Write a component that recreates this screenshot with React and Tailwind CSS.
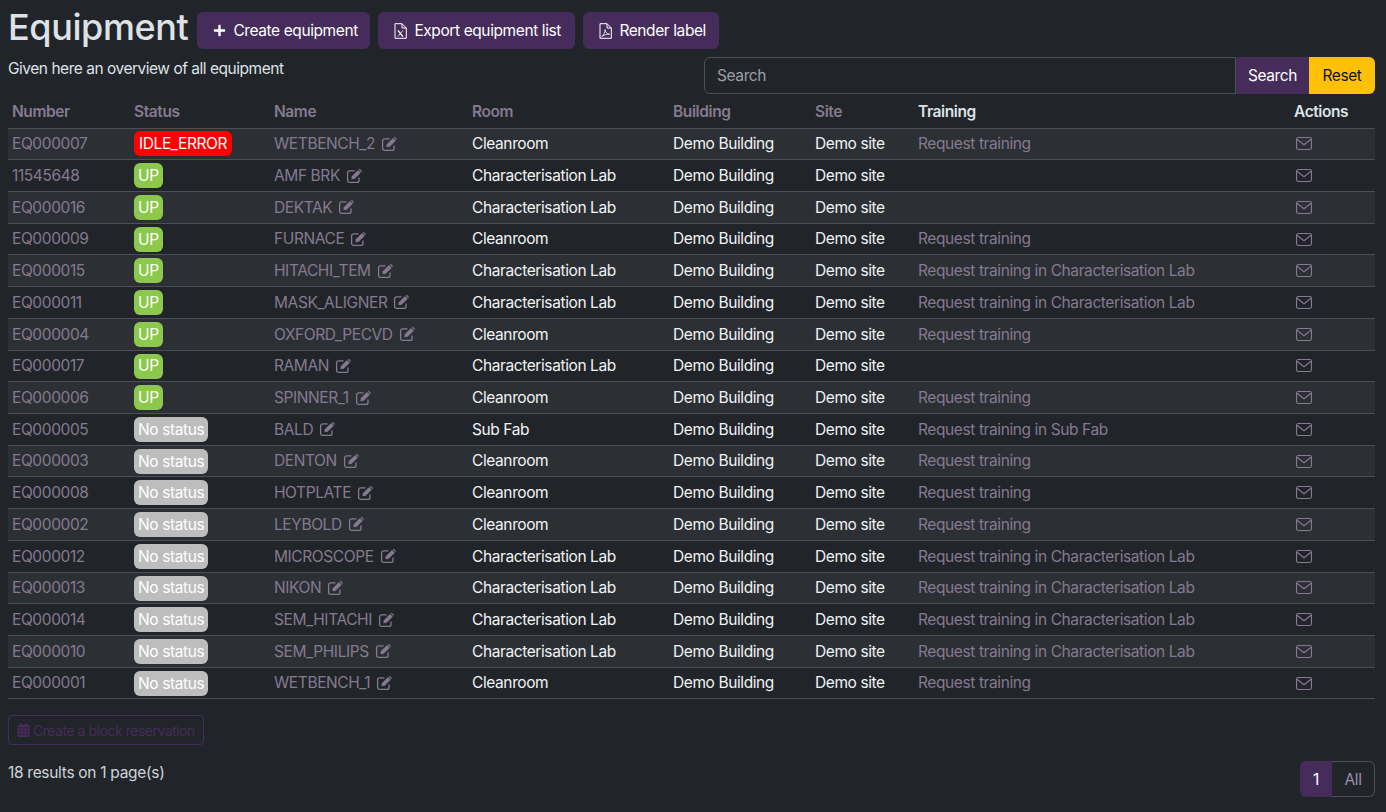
import React from 'react';
import { FaPlus, FaCalendarAlt } from 'react-icons/fa';

const CLEAN = 'Cleanroom';
const CHAR = 'Characterisation Lab';
const SUB = 'Sub Fab';

const rows = [
    ['EQ000007', 'IDLE_ERROR', 'WETBENCH_2', CLEAN, 'Request training'],
    ['11545648', 'UP', 'AMF BRK', CHAR, ''],
    ['EQ000016', 'UP', 'DEKTAK', CHAR, ''],
    ['EQ000009', 'UP', 'FURNACE', CLEAN, 'Request training'],
    ['EQ000015', 'UP', 'HITACHI_TEM', CHAR, 'Request training in Characterisation Lab'],
    ['EQ000011', 'UP', 'MASK_ALIGNER', CHAR, 'Request training in Characterisation Lab'],
    ['EQ000004', 'UP', 'OXFORD_PECVD', CLEAN, 'Request training'],
    ['EQ000017', 'UP', 'RAMAN', CHAR, ''],
    ['EQ000006', 'UP', 'SPINNER_1', CLEAN, 'Request training'],
    ['EQ000005', 'No status', 'BALD', SUB, 'Request training in Sub Fab'],
    ['EQ000003', 'No status', 'DENTON', CLEAN, 'Request training'],
    ['EQ000008', 'No status', 'HOTPLATE', CLEAN, 'Request training'],
    ['EQ000002', 'No status', 'LEYBOLD', CLEAN, 'Request training'],
    ['EQ000012', 'No status', 'MICROSCOPE', CHAR, 'Request training in Characterisation Lab'],
    ['EQ000013', 'No status', 'NIKON', CHAR, 'Request training in Characterisation Lab'],
    ['EQ000014', 'No status', 'SEM_HITACHI', CHAR, 'Request training in Characterisation Lab'],
    ['EQ000010', 'No status', 'SEM_PHILIPS', CHAR, 'Request training in Characterisation Lab'],
    ['EQ000001', 'No status', 'WETBENCH_1', CLEAN, 'Request training'],
];

const statusClass = (status) => {
    if (status === 'IDLE_ERROR') return 'bg-[#ff0000] px-[5px]';
    if (status === 'UP') return 'bg-[#8cc84b] px-[4px]';
    return 'bg-[#bdbdbd] px-[4px]';
};

const MailIcon = () => (
    <svg width="16" height="13" viewBox="0 0 16 13" fill="none" stroke="currentColor" strokeWidth="1.1" className="ml-[2px]">
        <rect x="0.55" y="0.55" width="14.9" height="11.9" rx="1.6" />
        <path d="M1 2.2 L8 7.8 L15 2.2" />
    </svg>
);

// square outline with a solid pencil, the old font-awesome look
const EditIcon = () => (
    <svg width="16" height="16" viewBox="0 0 16 16" fill="none" stroke="currentColor">
        <path strokeWidth="1.3" d="M8.5 2.8 H3.6 A2 2 0 0 0 1.6 4.8 V12.4 A2 2 0 0 0 3.6 14.4 H11 A2 2 0 0 0 13 12.4 V9.4" />
        <path fill="currentColor" strokeWidth="0.3" d="M5.6 11 L6 8.2 L12 2.2 L14.6 4.8 L8.5 10.7 Z" />
        <path fill="currentColor" strokeWidth="0.3" d="M12.8 1.5 C13.3 1 13.9 1 14.4 1.5 L15.3 2.4 C15.8 2.9 15.8 3.4 15.3 3.9 Z" />
    </svg>
);

const ExcelIcon = () => (
    <svg width="13" height="16" viewBox="0 0 13 16" fill="none" stroke="currentColor">
        <path strokeWidth="1" d="M1 0.7 H8 L12.3 5 V15.3 H1 Z M8 0.7 V5 H12.3" />
        <path strokeWidth="1.4" d="M3.9 7.4 L8.9 13.6" />
        <path strokeWidth="0.8" d="M8.9 7.4 L3.9 13.6" />
    </svg>
);

const PdfIcon = () => (
    <svg width="13" height="16" viewBox="0 0 13 16" fill="none" stroke="currentColor">
        <path strokeWidth="1" d="M1 0.7 H8 L12.3 5 V15.3 H1 Z M8 0.7 V5 H12.3" />
        <path strokeWidth="0.8" d="M2.8 13.6 C4.6 12.6 6.2 9 6 6.6 C6.6 9.4 8 10.9 10.6 11.3 C8 11 5 11.8 2.8 13.6 Z" />
    </svg>
);

const ActionButton = ({ icon, className, children }) => (
    <button className={`flex h-[37px] items-center gap-[5px] rounded-md bg-[#452c5a] pl-[13px] text-white ${className}`}>
        <span className="flex w-[18px] justify-center">{icon}</span>
        {children}
    </button>
);

const App = () => {
    return (
        <div className="min-h-[812px] bg-[#212529] px-2 text-[15.5px] tracking-[-0.4px] text-white font-['Inter',sans-serif]">
            {/* Header */}
            <div className="flex items-center gap-2 pt-[12px]">
                <h1 className="mr-[1px] pb-[7px] text-[36px] leading-[30px] font-medium text-[#dee2e6]">Equipment</h1>
                <ActionButton className="w-[173px]" icon={<FaPlus className="h-[13px] w-[13px]" />}>Create equipment</ActionButton>
                <ActionButton className="w-[197px]" icon={<ExcelIcon />}>Export equipment list</ActionButton>
                <ActionButton className="w-[136px]" icon={<PdfIcon />}>Render label</ActionButton>
            </div>

            <div className="mt-[8px] flex items-start justify-between">
                <p className="leading-[24px] tracking-[-0.48px] text-[#dee2e6]">Given here an overview of all equipment</p>
                <div className="mr-[3px] flex h-[37px] w-[671px]">
                    <div className="flex flex-1 items-center rounded-l-md border border-[#495057] px-3 text-[#9a9fa5]">Search</div>
                    <button className="w-[73px] bg-[#452c5a]">Search</button>
                    <button className="w-[66px] rounded-r-md bg-[#ffc107] text-[#111]">Reset</button>
                </div>
            </div>

            {/* Equipment table */}
            <table className="mt-[1px] w-[1367px] table-fixed border-collapse">
                <colgroup>
                    <col className="w-[122px]" />
                    <col className="w-[140px]" />
                    <col className="w-[198px]" />
                    <col className="w-[201px]" />
                    <col className="w-[142px]" />
                    <col className="w-[103px]" />
                    <col className="w-[376px]" />
                    <col className="w-[85px]" />
                </colgroup>
                <thead>
                    <tr className="h-[33px] border-b border-[#495057] text-left text-[#857a8f]">
                        <th className="px-1 font-semibold">Number</th>
                        <th className="px-1 font-semibold">Status</th>
                        <th className="px-1 font-semibold">Name</th>
                        <th className="px-1 font-semibold">Room</th>
                        <th className="px-1 font-semibold">Building</th>
                        <th className="px-1 font-semibold">Site</th>
                        <th className="px-1 font-semibold text-[#dee2e6]">Training</th>
                        <th className="px-1 font-semibold text-[#dee2e6]">Actions</th>
                    </tr>
                </thead>
                <tbody>
                    {rows.map((row, i) => (
                        <tr key={row[2]} className={`h-[31.72px] border-b border-[#495057] ${i % 2 === 0 ? 'bg-[#2c3034]' : ''}`}>
                            <td className="px-1 text-[#857a8f]">{row[0]}</td>
                            <td className="px-1">
                                <span className={`inline-flex h-[25px] items-center rounded-md align-middle text-white ${statusClass(row[1])}`}>{row[1]}</span>
                            </td>
                            <td className="px-1 text-[#857a8f]">
                                <span className="inline-flex items-center gap-[6px]">{row[2]} <EditIcon /></span>
                            </td>
                            <td className="px-1 text-[#f1f3f5]">{row[3]}</td>
                            <td className="px-1 text-[#f1f3f5]">Demo Building</td>
                            <td className="px-1 text-[#f1f3f5]">Demo site</td>
                            <td className="px-1 text-[#857a8f]">{row[4]}</td>
                            <td className="px-1 text-[#857a8f]"><MailIcon /></td>
                        </tr>
                    ))}
                </tbody>
            </table>

            <button className="mt-[16px] flex h-[30px] items-center gap-[3px] rounded-[4px] border border-[#452c5a] px-2 text-[14px] tracking-[-0.48px] text-[#452c5a]">
                <FaCalendarAlt className="h-[14px] w-[13px]" />
                Create a block reservation
            </button>

            {/* Pager */}
            <div className="mr-[3px] flex items-start justify-between">
                <p className="mt-[16px] tracking-[-0.3px] text-[#ced4da]">18 results on 1 page(s)</p>
                <div className="mt-[16px] flex h-[36px]">
                    <span className="flex w-[32px] items-center justify-center rounded-l-md bg-[#452c5a]">1</span>
                    <span className="flex w-[43px] items-center justify-center rounded-r-md border border-l-0 border-[#495057] text-[#9c8fa8]">All</span>
                </div>
            </div>
        </div>
    );
};

export default App;
